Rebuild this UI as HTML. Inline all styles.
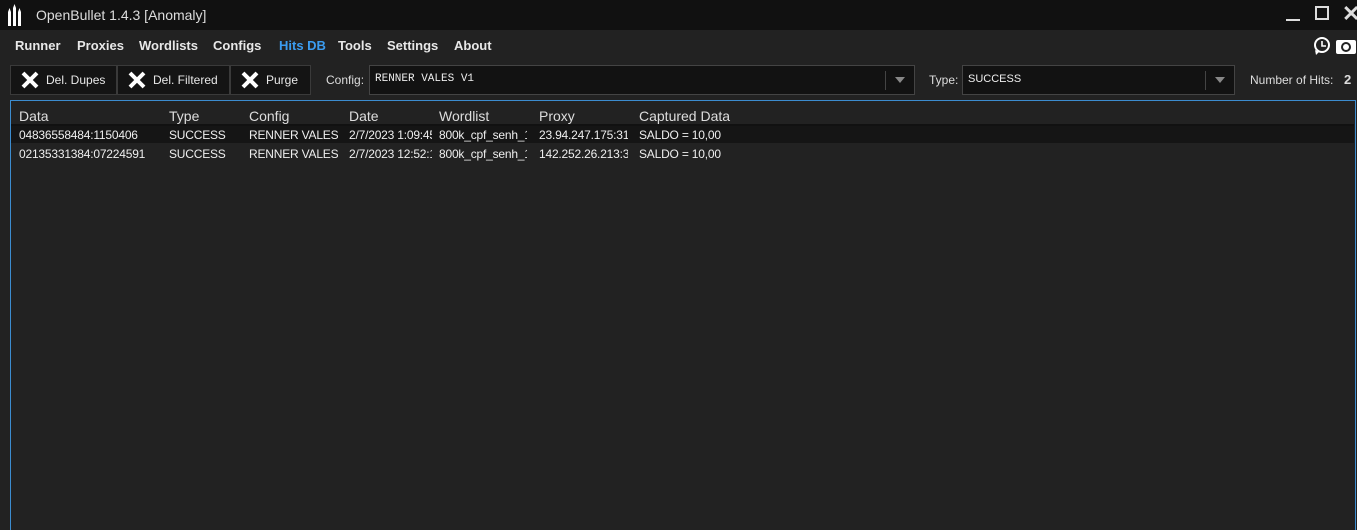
<!DOCTYPE html>
<html><head><style>
*{margin:0;padding:0;box-sizing:border-box}
body{width:1357px;height:526px;background:#222222;font-family:"Liberation Sans",sans-serif;color:#e8e8e8;position:relative;overflow:hidden}
.title{position:absolute;left:0;top:0;width:1357px;height:30px;background:#111111}
.abs{position:absolute;white-space:nowrap}
.menu{font-weight:bold;font-size:13px;top:38px}
.btn{position:absolute;top:65px;height:30px;background:#141414;border:1px solid #3a3a3a;font-size:12px}
.btn span{position:absolute;top:7px}
.x{position:absolute;left:9px;top:4px}
.combo{position:absolute;top:65px;height:30px;background:#121212;border:1px solid #444}
.combo .t{position:absolute;left:5px;top:7px;font-size:11px;font-family:"Liberation Mono",monospace;color:#eee}
.combo .sep{position:absolute;top:5px;width:1px;height:19px;background:#444}
.combo .ar{position:absolute;top:11px;width:0;height:0;border-left:5px solid transparent;border-right:5px solid transparent;border-top:6px solid #888}
.table{position:absolute;left:10px;top:100px;width:1346px;height:430px;border:1px solid #3c8ccf;border-bottom:none;background:#222}
.h{position:absolute;top:108px;font-size:14px;color:#ddd}
.c{position:absolute;font-size:12px;color:#eee;overflow:hidden;white-space:nowrap;letter-spacing:-0.2px}
</style></head><body>
<div class="title"></div>
<svg class="abs" style="left:7px;top:4px" width="16" height="22"><path d="M1 22V8l1.5-4L4 8v14z" fill="#fff"/><path d="M6 22V4l1.5-4L9 4v18z" fill="#fff"/><path d="M11 22V8l1.5-4L14 8v14z" fill="#fff"/></svg>
<div class="abs" style="left:36px;top:7px;font-size:14px;color:#ddd">OpenBullet 1.4.3 [Anomaly]</div>
<div class="abs" style="left:1286px;top:19px;width:14px;height:2px;background:#ddd"></div>
<div class="abs" style="left:1315px;top:6px;width:14px;height:14px;border:2px solid #ddd"></div>
<div class="abs" style="left:1342px;top:1px;font-size:22px;font-weight:bold;color:#ddd">✕</div>
<div class="abs menu" style="left:15px">Runner</div>
<div class="abs menu" style="left:77px">Proxies</div>
<div class="abs menu" style="left:139px">Wordlists</div>
<div class="abs menu" style="left:213px">Configs</div>
<div class="abs menu" style="left:279px;color:#3b9cf0">Hits DB</div>
<div class="abs menu" style="left:338px">Tools</div>
<div class="abs menu" style="left:387px">Settings</div>
<div class="abs menu" style="left:454px">About</div>
<svg class="abs" style="left:1312px;top:36px" width="45" height="20"><circle cx="10" cy="9" r="7" fill="none" stroke="#fff" stroke-width="2"/><path d="M10 5v5h4" stroke="#fff" stroke-width="1.6" fill="none"/><path d="M3 14l1 5 3-3" fill="#fff"/><rect x="24" y="4" width="20" height="14" rx="2" fill="#fff"/><circle cx="34" cy="11" r="5" fill="#222"/><circle cx="34" cy="11" r="3" fill="#fff"/></svg>
<div class="btn" style="left:10px;width:107px"><svg class="x" width="20" height="20"><path d="M3 3L17 17M17 3L3 17" stroke="#fff" stroke-width="4"/></svg><span style="left:35px">Del. Dupes</span></div>
<div class="btn" style="left:117px;width:113px"><svg class="x" width="20" height="20"><path d="M3 3L17 17M17 3L3 17" stroke="#fff" stroke-width="4"/></svg><span style="left:35px">Del. Filtered</span></div>
<div class="btn" style="left:230px;width:81px"><svg class="x" width="20" height="20"><path d="M3 3L17 17M17 3L3 17" stroke="#fff" stroke-width="4"/></svg><span style="left:35px">Purge</span></div>
<div class="abs" style="left:326px;top:73px;font-size:12px;color:#ddd">Config:</div>
<div class="combo" style="left:369px;width:546px"><div class="t">RENNER VALES V1</div><div class="sep" style="left:515px"></div><div class="ar" style="left:525px"></div></div>
<div class="abs" style="left:929px;top:73px;font-size:12px;color:#ddd">Type:</div>
<div class="combo" style="left:962px;width:273px"><div class="t" style="font-family:'Liberation Sans',sans-serif">SUCCESS</div><div class="sep" style="left:242px"></div><div class="ar" style="left:252px"></div></div>
<div class="abs" style="left:1250px;top:73px;font-size:12px;color:#ddd">Number of Hits:</div>
<div class="abs" style="left:1344px;top:72px;font-size:13px;font-weight:bold;color:#ddd">2</div>
<div class="table"></div>
<div class="abs" style="left:11px;top:124px;width:1343px;height:2px;background:#111"></div>
<div class="abs" style="left:11px;top:126px;width:1343px;height:17px;background:#151515"></div>
<div class="h" style="left:19px">Data</div><div class="h" style="left:169px">Type</div><div class="h" style="left:249px">Config</div><div class="h" style="left:349px">Date</div><div class="h" style="left:439px">Wordlist</div><div class="h" style="left:539px">Proxy</div><div class="h" style="left:639px">Captured Data</div>
<div class="c" style="left:19px;top:128px">04836558484:1150406</div>
<div class="c" style="left:169px;top:128px">SUCCESS</div>
<div class="c" style="left:249px;top:128px;width:89px">RENNER VALES V1</div>
<div class="c" style="left:349px;top:128px;width:83px">2/7/2023 1:09:45</div>
<div class="c" style="left:439px;top:128px;width:88px">800k_cpf_senh_1</div>
<div class="c" style="left:539px;top:128px;width:89px">23.94.247.175:3128</div>
<div class="c" style="left:639px;top:128px">SALDO = 10,00</div>
<div class="c" style="left:19px;top:147px">02135331384:07224591</div>
<div class="c" style="left:169px;top:147px">SUCCESS</div>
<div class="c" style="left:249px;top:147px;width:89px">RENNER VALES V1</div>
<div class="c" style="left:349px;top:147px;width:83px">2/7/2023 12:52:11</div>
<div class="c" style="left:439px;top:147px;width:88px">800k_cpf_senh_1</div>
<div class="c" style="left:539px;top:147px;width:89px">142.252.26.213:3128</div>
<div class="c" style="left:639px;top:147px">SALDO = 10,00</div>
</body></html>
